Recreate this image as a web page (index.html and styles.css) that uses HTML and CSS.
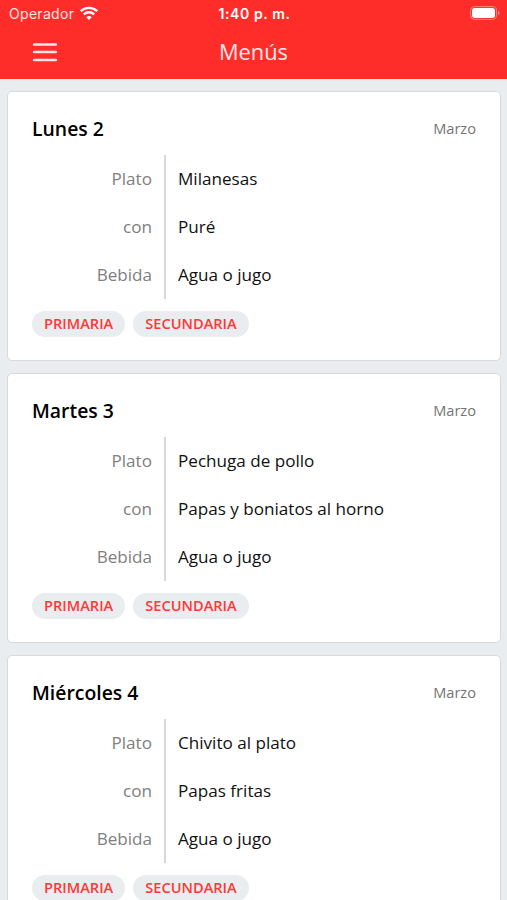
FILE: index.html
```html
<!DOCTYPE html>
<html lang="es">
<head>
<meta charset="utf-8">
<title>Menús</title>
<link rel="stylesheet" href="styles.css">
</head>
<body>
<header class="top">
  <div class="status">
    <div class="carrier"><span>Operador</span>
      <svg class="wifi" width="18" height="14" viewBox="0 0 18 14"><g fill="none" stroke="#fff" stroke-width="2.3"><path d="M.8 5.2a11.7 11.7 0 0 1 16.4 0"/><path d="M3.8 8.4a7.4 7.4 0 0 1 10.4 0"/></g><path d="M9 14L6.3 11.2a3.9 3.9 0 0 1 5.4 0z" fill="#fff"/></svg>
    </div>
    <div class="time">1:40 p. m.</div>
    <div class="power"><svg width="30" height="14" viewBox="0 0 30 14"><rect x=".6" y=".6" width="26" height="12.8" rx="4" fill="none" stroke="#ff8583"/><rect x="2" y="2" width="23" height="10" rx="2.7" fill="#fff"/><path d="M28 4.8v4.4q1.5-.6 1.5-2.2t-1.5-2.2" fill="#ff8583"/></svg></div>
  </div>
  <div class="bar">
    <svg class="burger" width="24" height="20" viewBox="0 0 24 20"><path d="M1 2.5h22M1 10h22M1 18h22" stroke="#ffe9e8" stroke-width="2.4" stroke-linecap="round"/></svg>
    <h1>Menús</h1>
  </div>
</header>
<main class="list">
  <article class="card">
    <div class="head"><h2>Lunes 2</h2><span class="month">Marzo</span></div>
    <dl class="meal"><dt>Plato</dt><dd>Milanesas</dd><dt>con</dt><dd>Puré</dd><dt>Bebida</dt><dd>Agua o jugo</dd></dl>
    <div class="tags"><span>PRIMARIA</span><span>SECUNDARIA</span></div>
  </article>
  <article class="card">
    <div class="head"><h2>Martes 3</h2><span class="month">Marzo</span></div>
    <dl class="meal"><dt>Plato</dt><dd>Pechuga de pollo</dd><dt>con</dt><dd>Papas y boniatos al horno</dd><dt>Bebida</dt><dd>Agua o jugo</dd></dl>
    <div class="tags"><span>PRIMARIA</span><span>SECUNDARIA</span></div>
  </article>
  <article class="card">
    <div class="head"><h2>Miércoles 4</h2><span class="month">Marzo</span></div>
    <dl class="meal"><dt>Plato</dt><dd>Chivito al plato</dd><dt>con</dt><dd>Papas fritas</dd><dt>Bebida</dt><dd>Agua o jugo</dd></dl>
    <div class="tags"><span>PRIMARIA</span><span>SECUNDARIA</span></div>
  </article>
</main>
</body>
</html>
```
FILE: styles.css
```css
* { box-sizing: border-box; }
html, body { height: 900px; overflow: hidden; }
body { margin: 0; background: #e9edf0; color: #111; font-family: "Open Sans", sans-serif; }
svg { display: block; }
.top { height: 79px; background: #ff2d2a; color: #fff; }
.status { display: grid; grid-template-columns: 1fr auto 1fr; align-items: center; height: 27px; padding: 0 7px 0 9px; font: 14px/20px Inter, sans-serif; }
.carrier { display: flex; align-items: center; gap: 6px; color: #ffe3e2; letter-spacing: .3px; }
.wifi { margin-top: -2px; }
.time { font-weight: 600; letter-spacing: .6px; }
.power { justify-self: end; margin-top: -1px; }
.bar { display: grid; grid-template-columns: 1fr auto 1fr; align-items: center; height: 50px; padding: 0 33px; }
h1 { margin: 0; color: #ffe9e8; font-size: 21.8px; font-weight: 400; line-height: 28px; }
.list { display: flex; flex-direction: column; gap: 12px; padding: 12px 6px 0 7px; }
.card { flex: none; height: 270px; padding: 24px; background: #fff; border: 1px solid #d5dade; border-radius: 5px; }
.head { display: flex; justify-content: space-between; align-items: center; height: 27px; margin-bottom: 12px; }
h2 { margin: 0; padding-bottom: 2px; color: #000; font-size: 19.4px; font-weight: 600; line-height: 27px; }
.month { padding-bottom: 3px; font-size: 14.6px; line-height: 20px; color: #757575; }
.meal { display: grid; grid-template-columns: 134px 1fr; margin: 0; font-size: 17.1px; line-height: 48px; }
dt { padding-right: 12px; text-align: right; color: #808080; border-right: 2px solid #d8d8d8; }
dd { margin: 0; padding-left: 12px; }
.tags { display: flex; gap: 8px; margin-top: 12px; }
.tags span { height: 26px; padding: 0 12px; border-radius: 13px; background: #e9edf0; color: #ff3735; font-size: 14.6px; font-weight: 600; line-height: 24px; }
```
